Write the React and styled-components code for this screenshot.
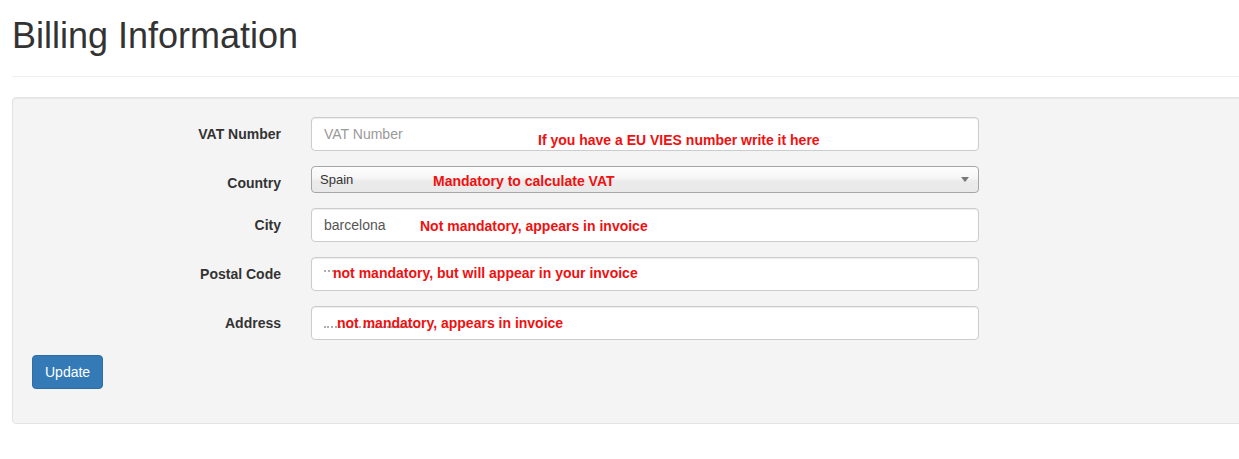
import React from 'react';
import styled, { createGlobalStyle } from 'styled-components';

const GlobalStyle = createGlobalStyle`
  html, body {
    margin: 0;
    padding: 0;
    background: #fff;
    overflow: hidden;
  }
  body {
    font-family: "Liberation Sans", Arial, Helvetica, sans-serif;
    font-size: 14px;
    line-height: 20px;
    color: #333;
  }
`;

const Page = styled.div`
  margin-left: 12px;
  width: 1250px;
`;

const PageHeader = styled.div`
  padding-bottom: 20px;
  border-bottom: 1px solid #eee;
`;

const Title = styled.h1`
  margin: 16px 0 0;
  font-size: 36px;
  line-height: 40px;
  font-weight: 500;
  color: #333;
`;

const Well = styled.div`
  margin-top: 20px;
  background: #f4f4f4;
  border: 1px solid #e3e3e3;
  border-radius: 4px;
  padding: 19px;
  box-shadow: inset 0 1px 1px rgba(0, 0, 0, 0.05);
`;

const Form = styled.form`
  display: flex;
  flex-direction: column;
  gap: 15px;
`;

const Row = styled.div`
  display: grid;
  grid-template-columns: 249px 668px;
  column-gap: 30px;
  align-items: start;
`;

const Label = styled.label`
  padding-top: 7px;
  text-align: right;
  font-weight: bold;
  font-size: 14px;
  line-height: 20px;
  color: #333;
`;

const Field = styled.div`
  position: relative;
`;

const Input = styled.input`
  display: block;
  box-sizing: border-box;
  width: 100%;
  height: 34px;
  padding: 6px 12px;
  font-family: inherit;
  font-size: 14px;
  line-height: 20px;
  color: #555;
  background: #fff;
  border: 1px solid #ccc;
  border-radius: 4px;
  box-shadow: inset 0 1px 1px rgba(0, 0, 0, 0.075);
  outline: none;

  &::placeholder {
    color: #999;
  }
`;

const SelectBox = styled.div`
  position: relative;
  box-sizing: border-box;
  height: 27px;
  border: 1px solid #a6a6a6;
  border-radius: 4px;
  background: linear-gradient(#fdfdfd 0%, #f6f6f6 45%, #ebebeb 55%, #e9e9e9 100%);
  font-size: 13px;
  line-height: 25px;
  padding-left: 8px;
  color: #333;

  &::after {
    content: '';
    position: absolute;
    right: 9px;
    top: 10px;
    border-left: 4px solid transparent;
    border-right: 4px solid transparent;
    border-top: 5px solid #777;
  }
`;

/* redacted value left under the annotation */
const Scribble = styled.span`
  position: absolute;
  left: 13px;
  top: ${p => p.$top}px;
  width: ${p => p.$width}px;
  height: 0;
  border-top: 2px dotted #9a9a9a;
  opacity: 0.8;
`;

const Note = styled.span`
  position: absolute;
  left: ${p => p.$left}px;
  top: ${p => p.$top}px;
  font-weight: bold;
  font-size: 14px;
  line-height: 16px;
  color: #f01010;
  white-space: nowrap;
  pointer-events: none;
`;

const Button = styled.button`
  align-self: flex-start;
  margin-bottom: 15px;
  padding: 6px 12px;
  font-family: inherit;
  font-size: 14px;
  line-height: 20px;
  color: #fff;
  background: #337ab7;
  border: 1px solid #2e6da4;
  border-radius: 4px;
`;

const App = () => {
  return (
    <>
      <GlobalStyle />
      <Page>
        <PageHeader>
          <Title>Billing Information</Title>
        </PageHeader>

        <Well>
          <Form onSubmit={e => e.preventDefault()}>
            <Row>
              <Label>VAT Number</Label>
              <Field>
                <Input placeholder="VAT Number" />
                <Note $left={227} $top={15}>If you have a EU VIES number write it here</Note>
              </Field>
            </Row>

            <Row>
              <Label>Country</Label>
              <Field>
                <SelectBox>Spain</SelectBox>
                <Note $left={122} $top={7}>Mandatory to calculate VAT</Note>
              </Field>
            </Row>

            <Row>
              <Label>City</Label>
              <Field>
                <Input defaultValue="barcelona" />
                <Note $left={109} $top={10}>Not mandatory, appears in invoice</Note>
              </Field>
            </Row>

            <Row>
              <Label>Postal Code</Label>
              <Field>
                <Input />
                <Scribble $top={13} $width={10} />
                <Note $left={22} $top={8}>not mandatory, but will appear in your invoice</Note>
              </Field>
            </Row>

            <Row>
              <Label>Address</Label>
              <Field>
                <Input />
                <Scribble $top={20} $width={96} />
                <Note $left={26} $top={9}>not mandatory, appears in invoice</Note>
              </Field>
            </Row>

            <Button type="submit">Update</Button>
          </Form>
        </Well>
      </Page>
    </>
  );
};

export default App;
